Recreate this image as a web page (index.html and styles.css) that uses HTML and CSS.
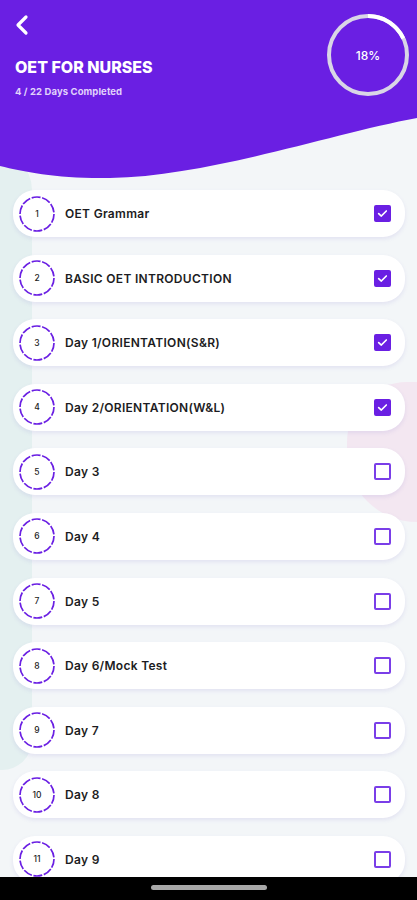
FILE: index.html
```html
<!DOCTYPE html>
<html lang="en">
<head>
    <meta charset="UTF-8">
    <meta name="viewport" content="width=device-width, initial-scale=1.0">
    <title>OET For Nurses</title>
    <link rel="stylesheet" href="styles.css">
</head>
<body>

    <div class="screen">
        <!-- background decorations -->
        <div class="blob blob-left"></div>
        <div class="blob blob-right"></div>

        <div class="header">
            <svg class="wave" viewBox="0 0 417 180" preserveAspectRatio="none">
                <path d="M0 0 H417 V118 C330 134 210 176 110 178 C60 179 25 172 0 166 Z" fill="#6a1fe3"/>
            </svg>
            <div class="header-left">
                <svg class="back" width="16" height="22" viewBox="0 0 16 22">
                    <path d="M12 3 L4 11 L12 19" fill="none" stroke="#fff" stroke-width="3.2" stroke-linecap="round" stroke-linejoin="round"/>
                </svg>
                <h1>OET FOR NURSES</h1>
                <p class="sub">4 / 22 Days Completed</p>
            </div>
            <div class="ring">
                <svg width="84" height="84" viewBox="0 0 84 84">
                    <circle cx="42" cy="42" r="39" fill="none" stroke="#d9d6e6" stroke-width="4"/>
                    <circle cx="42" cy="42" r="39" fill="none" stroke="#ffffff" stroke-width="4"
                            stroke-dasharray="44 245" transform="rotate(-90 42 42)"/>
                </svg>
                <span>18%</span>
            </div>
        </div>

        <ul class="days">
            <li class="day"><span class="num">1</span><span class="name">OET Grammar</span><span class="check done"></span></li>
            <li class="day"><span class="num">2</span><span class="name">BASIC OET INTRODUCTION</span><span class="check done"></span></li>
            <li class="day"><span class="num">3</span><span class="name">Day 1/ORIENTATION(S&amp;R)</span><span class="check done"></span></li>
            <li class="day"><span class="num">4</span><span class="name">Day 2/ORIENTATION(W&amp;L)</span><span class="check done"></span></li>
            <li class="day"><span class="num">5</span><span class="name">Day 3</span><span class="check"></span></li>
            <li class="day"><span class="num">6</span><span class="name">Day 4</span><span class="check"></span></li>
            <li class="day"><span class="num">7</span><span class="name">Day 5</span><span class="check"></span></li>
            <li class="day"><span class="num">8</span><span class="name">Day 6/Mock Test</span><span class="check"></span></li>
            <li class="day"><span class="num">9</span><span class="name">Day 7</span><span class="check"></span></li>
            <li class="day"><span class="num">10</span><span class="name">Day 8</span><span class="check"></span></li>
            <li class="day"><span class="num">11</span><span class="name">Day 9</span><span class="check"></span></li>
        </ul>

        <div class="navbar"><div class="pill"></div></div>
    </div>

</body>
</html>
```

FILE: styles.css
```css
* {
    margin: 0;
    padding: 0;
    box-sizing: border-box;
}

body {
    font-family: Inter, 'Open Sans', sans-serif;
    background: #f3f6f8;
}

.screen {
    position: relative;
    width: 417px;
    height: 900px;
    overflow: hidden;
    background: #f3f6f8;
}

.blob {
    position: absolute;
}

.blob-left {
    left: -30px;
    top: 150px;
    width: 62px;
    height: 620px;
    background: #e4f0f0;
    border-radius: 0 40px 30px 0;
}

.blob-right {
    right: -40px;
    top: 382px;
    width: 110px;
    height: 140px;
    background: #f3e7f1;
    border-radius: 60px 0 0 70px;
}

.header {
    position: relative;
    height: 180px;
    display: flex;
    justify-content: space-between;
    padding: 14px 7px 0 15px;
    color: #fff;
}

.wave {
    position: absolute;
    top: 0;
    left: 0;
    width: 100%;
    height: 100%;
}

.header-left {
    position: relative;
}

.back {
    display: block;
    margin-left: -1px;
}

h1 {
    font-size: 16px;
    font-weight: 800;
    letter-spacing: 0;
    margin-top: 21px;
}

.sub {
    font-size: 9.5px;
    font-weight: 700;
    letter-spacing: 0.1px;
    color: #e1d3fb;
    margin-top: 9px;
}

.ring {
    position: relative;
    width: 84px;
    height: 84px;
    margin-top: -1px;
}

.ring svg {
    display: block;
}

.ring span {
    position: absolute;
    inset: 0;
    display: flex;
    align-items: center;
    justify-content: center;
    font-size: 12px;
    font-weight: 500;
}

.days {
    position: relative;
    list-style: none;
    margin-top: 10px;
    padding: 0 12px 0 13px;
}

.day {
    display: flex;
    align-items: center;
    height: 47px;
    margin-bottom: 17.6px;
    padding: 0 14px 0 6px;
    background: #fff;
    border-radius: 22px;
    box-shadow: 0 2px 4px rgba(110, 90, 200, 0.12);
}

.num {
    width: 36px;
    height: 36px;
    flex-shrink: 0;
    background: url("data:image/svg+xml;utf8,<svg xmlns='http://www.w3.org/2000/svg' viewBox='0 0 36 36'><circle cx='18' cy='18' r='17' fill='none' stroke='%236a1fe3' stroke-width='1.7' stroke-dasharray='9 1.6'/></svg>") center / 100% no-repeat;
    display: flex;
    align-items: center;
    justify-content: center;
    font-size: 8.5px;
    font-weight: 500;
    color: #222;
}

.name {
    flex: 1;
    margin-left: 10px;
    font-size: 12px;
    font-weight: 600;
    letter-spacing: 0.3px;
    color: #1c1c22;
}

.check {
    width: 17px;
    height: 17px;
    border: 2px solid #7a3ee8;
    border-radius: 2px;
}

.check.done {
    background: #6a1fe3 url("data:image/svg+xml;utf8,<svg xmlns='http://www.w3.org/2000/svg' viewBox='0 0 17 17'><path d='M3.5 8.6 L7 11.8 L13.5 5.2' fill='none' stroke='white' stroke-width='2.2' stroke-linecap='round' stroke-linejoin='round'/></svg>") center / 100% no-repeat;
    border-color: #6a1fe3;
}

.navbar {
    position: absolute;
    left: 0;
    bottom: 0;
    width: 100%;
    height: 23px;
    background: #000;
    display: flex;
    justify-content: center;
    padding-top: 8px;
}

.pill {
    width: 116px;
    height: 5px;
    border-radius: 3px;
    background: #a8a8a8;
}
```
